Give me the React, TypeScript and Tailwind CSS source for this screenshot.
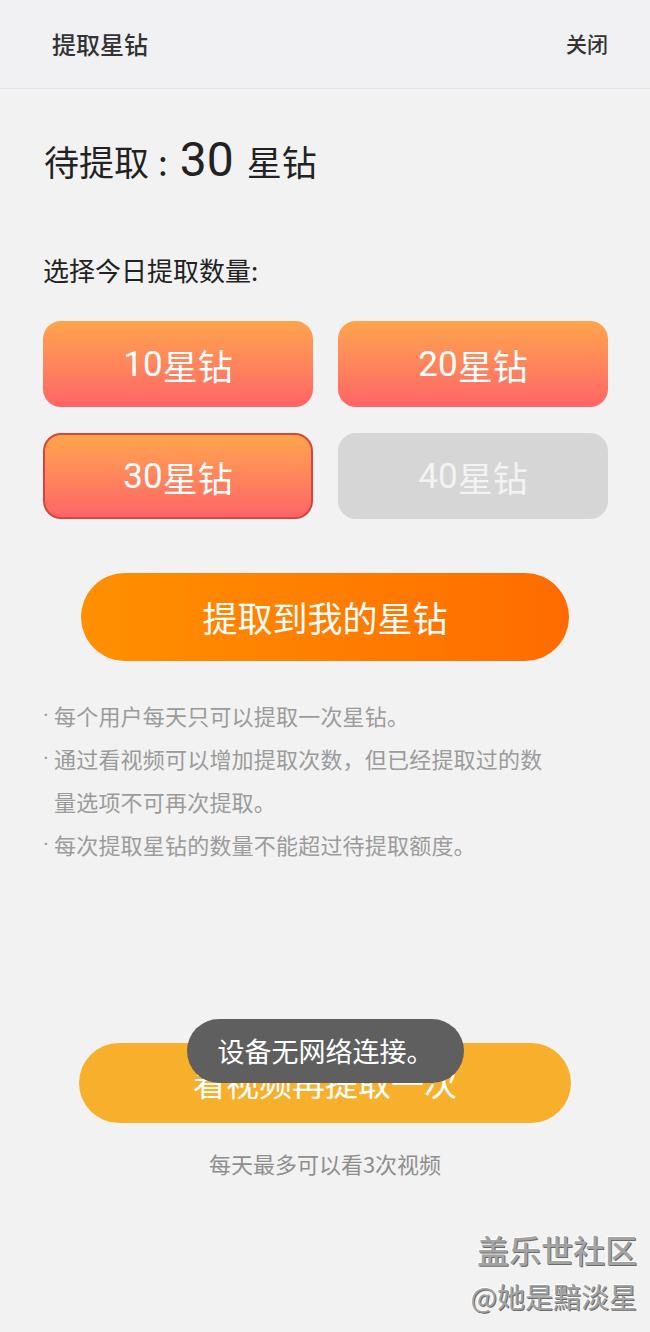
const font = { fontFamily: '"Noto Sans CJK SC", sans-serif' };

const options = [
  { label: '10', state: 'normal' },
  { label: '20', state: 'normal' },
  { label: '30', state: 'selected' },
  { label: '40', state: 'disabled' },
];

const notes = [
  ['每个用户每天只可以提取一次星钻。'],
  ['通过看视频可以增加提取次数，但已经提取过的数', '量选项不可再次提取。'],
  ['每次提取星钻的数量不能超过待提取额度。'],
];

function OptionButton({ label, state }: { label: string; state: string }) {
  const base =
    'h-[86px] rounded-[18px] flex items-center justify-center text-[35px] leading-none';
  if (state === 'disabled') {
    return (
      <div className={`${base} bg-[#d6d6d6] text-[#f3f3f3]`}>
        <span className="font-['Roboto']">{label}</span>
        <span>星钻</span>
      </div>
    );
  }
  return (
    <div
      className={`${base} bg-gradient-to-b from-[#ffa44c] to-[#ff6366] text-white ${
        state === 'selected' ? 'border-2 border-[#d8443f]' : ''
      }`}
    >
      <span className="font-['Roboto']">{label}</span>
      <span>星钻</span>
    </div>
  );
}

export default function App() {
  return (
    <div className="relative min-h-[1332px] w-[650px] bg-[#f2f2f2] overflow-hidden" style={font}>
      {/* Header */}
      <div className="h-[89px] bg-[#f1f1f4] border-b border-[#e3e3e6] flex items-center justify-between pl-[52px] pr-[42px]">
        <span className="text-[24px] font-medium text-[#333]">提取星钻</span>
        <span className="text-[21px] font-medium text-[#333]">关闭</span>
      </div>

      <div className="px-[43px]">
        {/* Pending amount */}
        <div className="mt-[35px] h-[65px] flex items-baseline text-[#222] pl-[1px]">
          <span className="text-[35px]">待提取</span>
          <span className="text-[35px] ml-[9px] mr-[12px]">:</span>
          <span className="text-[48px] font-['Roboto']">30</span>
          <span className="text-[35px] ml-[13px]">星钻</span>
        </div>

        <div className="mt-[66px] text-[26px] leading-[30px] text-[#222]">选择今日提取数量:</div>

        {/* Options */}
        <div className="mt-[36px] grid grid-cols-2 gap-x-[25px] gap-y-[26px] w-[565px]">
          {options.map((o) => (
            <OptionButton key={o.label} label={o.label} state={o.state} />
          ))}
        </div>

        {/* Main button */}
        <div className="mt-[54px] mx-auto w-[488px] h-[88px] rounded-full bg-gradient-to-r from-[#ff9000] to-[#ff6b00] flex items-center justify-center text-white text-[35px]">
          提取到我的星钻
        </div>

        {/* Notes */}
        <div className="mt-[33px] text-[22px] leading-[43px] text-[#9b9b9b]">
          {notes.map((lines, i) => (
            <div key={i} className="flex">
              <span className="w-[11px] shrink-0 font-['Roboto']">·</span>
              <div className="tracking-[0.2px]">
                {lines.map((l) => (
                  <div key={l}>{l}</div>
                ))}
              </div>
            </div>
          ))}
        </div>

        {/* Video button */}
        <div className="mt-[177px] mx-auto w-[492px] h-[80px] rounded-full bg-[#f8b02c] flex items-center justify-center text-white text-[33px]">
          看视频再提取一次
        </div>

        <div className="mt-[27px] text-center text-[22px] leading-[26px] text-[#8e8e8e]">
          每天最多可以看3次视频
        </div>
      </div>

      {/* Toast */}
      <div className="absolute left-[187px] top-[1019px] w-[277px] h-[64px] rounded-[32px] bg-[#5f5f5f] flex items-center justify-center text-white text-[27px]">
        设备无网络连接。
      </div>

      {/* Watermark */}
      <div className="absolute right-[13px] top-[1230px] flex flex-col items-end text-[#a3a3a3]">
        <span className="text-[32px] leading-[38px] font-medium [text-shadow:1px_1px_0_#6a6a6a,-1px_-1px_0_#ffffff]">
          盖乐世社区
        </span>
        <span className="mt-[10px] text-[28px] leading-[36px] [text-shadow:1px_1px_0_#6a6a6a,-1px_-1px_0_#ffffff]">
          @她是黯淡星
        </span>
      </div>
    </div>
  );
}
